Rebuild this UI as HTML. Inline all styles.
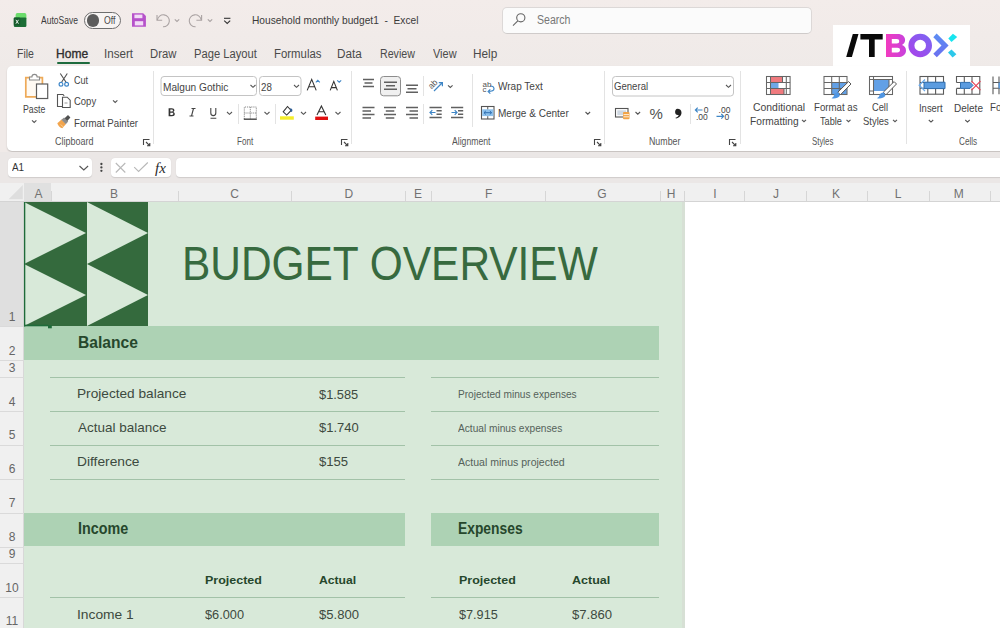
<!DOCTYPE html>
<html><head><meta charset="utf-8"><title>Excel</title><style>
*{margin:0;padding:0;box-sizing:border-box}
html,body{width:1000px;height:628px;overflow:hidden}
body{background:#f0eae8;font-family:"Liberation Sans",sans-serif;position:relative}
.a{position:absolute}
.tx{position:absolute;line-height:1;white-space:nowrap;transform-origin:0 0}
.ch{position:absolute;top:187.8px;width:40px;text-align:center;font-size:12px;line-height:1;color:#727272}
.rh{position:absolute;left:0;width:24px;text-align:center;font-size:12px;line-height:1;color:#666}
svg{position:absolute;overflow:visible}
</style></head><body>
<!-- title bar -->
<div class="a" style="left:0;top:0;width:1000px;height:70px;background:linear-gradient(#f3ecea,#efeae8)"></div>
<div class="a" style="left:501.7px;top:6.8px;width:310px;height:27.2px;background:#fbfbfb;border:1px solid #dcd8d7;border-bottom-color:#cfcbca;border-radius:5px"></div>
<!-- toggle -->
<div class="a" style="left:84px;top:11.5px;width:37px;height:17px;border:1px solid #6e6e6e;border-radius:9px;background:#f7f4f3"></div>
<div class="a" style="left:86.5px;top:14px;width:12.5px;height:12.5px;border-radius:50%;background:#5c5c5c"></div>
<!-- logo box -->
<div class="a" style="left:833px;top:25px;width:137px;height:45px;background:#fff"></div>
<!-- home underline -->
<div class="a" style="left:57px;top:61.6px;width:33px;height:2.3px;background:#1e6b3e;border-radius:1px"></div>
<!-- ribbon -->
<div class="a" style="left:7px;top:66.3px;width:1010px;height:84.3px;background:#fff;border-radius:5px;box-shadow:0 1px 1.5px rgba(0,0,0,.2)"></div>
<!-- formula bar -->
<div class="a" style="left:0;top:152px;width:1000px;height:31px;background:#ebe7e6"></div>
<div class="a" style="left:8px;top:158px;width:84px;height:19px;background:#fff;border-radius:4px;box-shadow:0 0.5px 1px rgba(0,0,0,.12)"></div>
<div class="a" style="left:111px;top:158px;width:60px;height:19px;background:#fff;border-radius:4px;box-shadow:0 0.5px 1px rgba(0,0,0,.12)"></div>
<div class="a" style="left:176px;top:158px;width:830px;height:19px;background:#fff;border-radius:4px;box-shadow:0 0.5px 1px rgba(0,0,0,.12)"></div>
<!-- column header -->
<div class="a" style="left:0;top:183px;width:1000px;height:19px;background:#f0f0f0;border-bottom:1px solid #d4d4d4"></div>
<div class="a" style="left:24px;top:183px;width:27px;height:18px;background:#e0e0e0"></div>
<!-- row header -->
<div class="a" style="left:0;top:202px;width:24px;height:426px;background:#f0f0f0;border-right:1px solid #d8d8d8"></div>
<div class="a" style="left:0;top:202px;width:24px;height:124px;background:#dfdfdf"></div>
<div class="a" style="left:50.5px;top:191px;width:1px;height:10px;background:#d6d6d6"></div><div class="a" style="left:177.5px;top:191px;width:1px;height:10px;background:#d6d6d6"></div><div class="a" style="left:290.5px;top:191px;width:1px;height:10px;background:#d6d6d6"></div><div class="a" style="left:404.5px;top:191px;width:1px;height:10px;background:#d6d6d6"></div><div class="a" style="left:430.5px;top:191px;width:1px;height:10px;background:#d6d6d6"></div><div class="a" style="left:544.5px;top:191px;width:1px;height:10px;background:#d6d6d6"></div><div class="a" style="left:659.5px;top:191px;width:1px;height:10px;background:#d6d6d6"></div><div class="a" style="left:684.0px;top:191px;width:1px;height:10px;background:#d6d6d6"></div><div class="a" style="left:744.0px;top:191px;width:1px;height:10px;background:#d6d6d6"></div><div class="a" style="left:805.5px;top:191px;width:1px;height:10px;background:#d6d6d6"></div><div class="a" style="left:867.0px;top:191px;width:1px;height:10px;background:#d6d6d6"></div><div class="a" style="left:928.5px;top:191px;width:1px;height:10px;background:#d6d6d6"></div><div class="a" style="left:989.5px;top:191px;width:1px;height:10px;background:#d6d6d6"></div><div class="a" style="left:0;top:325.5px;width:24px;height:1px;background:#dadada"></div><div class="a" style="left:0;top:359.5px;width:24px;height:1px;background:#dadada"></div><div class="a" style="left:0;top:376.5px;width:24px;height:1px;background:#dadada"></div><div class="a" style="left:0;top:410.5px;width:24px;height:1px;background:#dadada"></div><div class="a" style="left:0;top:444.5px;width:24px;height:1px;background:#dadada"></div><div class="a" style="left:0;top:478.5px;width:24px;height:1px;background:#dadada"></div><div class="a" style="left:0;top:512.5px;width:24px;height:1px;background:#dadada"></div><div class="a" style="left:0;top:546.5px;width:24px;height:1px;background:#dadada"></div><div class="a" style="left:0;top:562.5px;width:24px;height:1px;background:#dadada"></div><div class="a" style="left:0;top:596.5px;width:24px;height:1px;background:#dadada"></div>
<!-- sheet -->
<div class="a" style="left:24px;top:202px;width:976px;height:426px;background:#fff"></div>
<div class="a" style="left:24px;top:202px;width:660.5px;height:426px;background:#d8e9d9"></div>
<div class="a" style="left:682px;top:202px;width:2.5px;height:426px;background:#d7e0d5"></div>
<!-- bands -->
<div class="a" style="left:24px;top:326px;width:635px;height:34px;background:#add2b4"></div>
<div class="a" style="left:24px;top:513px;width:381px;height:33px;background:#add2b4"></div>
<div class="a" style="left:431px;top:513px;width:228px;height:33px;background:#add2b4"></div>
<!-- lines -->
<div class="a" style="left:50px;top:376.5px;width:355px;height:1px;background:#a2c2a8"></div>
<div class="a" style="left:50px;top:410.5px;width:355px;height:1px;background:#a2c2a8"></div>
<div class="a" style="left:50px;top:444.5px;width:355px;height:1px;background:#a2c2a8"></div>
<div class="a" style="left:50px;top:478.5px;width:355px;height:1px;background:#a2c2a8"></div>
<div class="a" style="left:431px;top:376.5px;width:228px;height:1px;background:#a2c2a8"></div>
<div class="a" style="left:431px;top:410.5px;width:228px;height:1px;background:#a2c2a8"></div>
<div class="a" style="left:431px;top:444.5px;width:228px;height:1px;background:#a2c2a8"></div>
<div class="a" style="left:431px;top:478.5px;width:228px;height:1px;background:#a2c2a8"></div>
<div class="a" style="left:50px;top:596.5px;width:355px;height:1px;background:#a2c2a8"></div>
<div class="a" style="left:431px;top:596.5px;width:228px;height:1px;background:#a2c2a8"></div>
<!-- graphic -->
<svg style="left:0;top:0" width="1000" height="628">
<rect x="24" y="202" width="124" height="124" fill="#346a3d"/>
<path d="M24 202 L86 233 L24 264 Z M24 264 L86 295 L24 326 Z M87 202 L148 233 L87 264 Z M87 264 L148 295 L87 326 Z" fill="#d8e9d9"/>
</svg>
<svg style="left:0;top:0" width="1000" height="628" viewBox="0 0 1000 628">
<!-- Excel icon -->
<rect x="15.6" y="13.1" width="10.8" height="7" rx="1.8" fill="#6cdc6c"/>
<rect x="13.8" y="17.6" width="12.6" height="9.3" rx="1.2" fill="#1c6e36"/>
<rect x="13.8" y="17.6" width="6.4" height="7.8" rx="1" fill="#155a2b"/>
<path d="M15.9 19.8l2.6 3.9M18.5 19.8l-2.6 3.9" stroke="#eef8f0" stroke-width=".95"/>
<!-- save -->
<path d="M132 13.2h11.2l2.7 2.7v10.9H132z" fill="#b652ca"/>
<rect x="134.4" y="14.6" width="8" height="3.6" fill="#f2dcf7"/>
<rect x="134.8" y="21.2" width="8.4" height="4.2" fill="#f2dcf7"/>
<!-- undo / redo -->
<g fill="none" stroke="#aaa3a3" stroke-width="1.1">
<path d="M157 15v5.2h5.2"/><path d="M157.4 20A6 6 0 1 1 163 26.8"/>
<path d="M174.8 19.3l2.2 2.2 2.2-2.2"/>
<path d="M201.6 15v5.2h-5.2"/><path d="M201.2 20A6 6 0 1 0 195.6 26.8"/>
<path d="M207.8 19.3l2.2 2.2 2.2-2.2"/>
</g>
<g fill="none" stroke="#333" stroke-width="1.1">
<path d="M224 18.3h6.4"/><path d="M224.2 20.6l3 2.8 3-2.8"/>
</g>
<!-- search -->
<g fill="none" stroke="#666" stroke-width="1.1"><circle cx="520.8" cy="17.8" r="4.1"/><path d="M517.8 20.8l-4.8 4.8"/></g>
<!-- ITBOX logo -->
<defs>
<linearGradient id="gB" x1="0" x2="1" y1="0" y2="0"><stop offset="0" stop-color="#f23bbf"/><stop offset="1" stop-color="#c742dd"/></linearGradient>
<linearGradient id="gO" x1="0" x2="1" y1="1" y2="0"><stop offset="0" stop-color="#a545ea"/><stop offset="1" stop-color="#7f62f2"/></linearGradient>
<linearGradient id="gC" x1="0" x2="0" y1="0" y2="1"><stop offset="0" stop-color="#5c8ef3"/><stop offset="1" stop-color="#6b6ff0"/></linearGradient>
<linearGradient id="gX" x1="0" x2="0" y1="0" y2="1"><stop offset="0" stop-color="#17e9ef"/><stop offset="1" stop-color="#2fc3ea"/></linearGradient>
</defs>
<path d="M846.2 57h5.7l6.6-23.1h-5.7z" fill="#0a0a0a"/>
<path d="M860.4 33.9h22.3v5.5h-8v17.6h-5.7V39.4h-8.6z" fill="#0a0a0a"/>
<path d="M886 33.9h11.5c5 0 7.6 2.7 7.6 6.1 0 2.3-1.2 4-3.1 4.9 2.4.8 4 2.8 4 5.5 0 4-3 6.6-8.2 6.6H886z M891.8 38.9v4.5h4.9c1.7 0 2.5-.8 2.5-2.25 0-1.45-.8-2.25-2.5-2.25z M891.8 47.8v4.6h5.5c1.8 0 2.7-.8 2.7-2.3 0-1.5-.9-2.3-2.7-2.3z" fill="url(#gB)" fill-rule="evenodd"/>
<circle cx="920.2" cy="45.5" r="8.8" fill="none" stroke="url(#gO)" stroke-width="6"/>
<path d="M936.6 33.4l12 12.2-11.8 11.7-3.5-3.5 8.2-8.2-8.2-8.4z" fill="url(#gC)"/>
<path d="M948.3 38.6l4.6-4.9 4.3 3.2-5.7 5.2z" fill="#17e5ef"/>
<path d="M948 52.6l3.5-3.2 4.9 4.9-3.8 3.2z" fill="#2cc8ea"/>
</svg>
<svg style="left:0;top:0" width="1000" height="628" viewBox="0 0 1000 628">
<!-- separators -->
<g stroke="#e3e3e3" stroke-width="1">
<path d="M153.5 71v73M351.5 71v73M604.5 71v73M740.5 71v73M906.5 71v73"/>
<path d="M238.5 104v20M275.5 104v20M423.5 76v20M423.5 104v20M472.5 74v53M690.5 104v20"/>
</g>
<!-- dialog launchers -->
<g fill="none" stroke="#444" stroke-width="1.1">
<path d="M143.5 145v-5.5h6"/><path d="M146 142l3.6 3.6M149.8 143v2.8H147"/>
<path d="M341.5 145v-5.5h6"/><path d="M344 142l3.6 3.6M347.8 143v2.8H345"/>
<path d="M594.5 145v-5.5h6"/><path d="M597 142l3.6 3.6M600.8 143v2.8H598"/>
<path d="M729.5 145v-5.5h6"/><path d="M732 142l3.6 3.6M735.8 143v2.8H733"/>
</g>
<!-- Paste -->
<path d="M25.8 77.6h16.6v19.2H25.8z" fill="#fffaf3" stroke="#eeaa58" stroke-width="1.7"/>
<path d="M29.5 80h10v-3h-2.4a2.6 2.6 0 0 0-5.2 0h-2.4z" fill="#fff" stroke="#8b8b8b" stroke-width="1.1"/>
<rect x="36.5" y="84" width="11.2" height="14.5" fill="#fff" stroke="#5c5c5c" stroke-width="1.2"/>
<!-- font boxes -->
<rect x="161" y="76.5" width="95.5" height="19" rx="3" fill="#fff" stroke="#c4c4c4"/>
<rect x="259.5" y="76.5" width="41.5" height="19" rx="3" fill="#fff" stroke="#c4c4c4"/>
<rect x="612.5" y="76.5" width="121" height="19.5" rx="3" fill="#fff" stroke="#c4c4c4"/>
<!-- chevrons -->
<g fill="none" stroke="#555" stroke-width="1.1">
<path d="M32 120.3l2.2 2.2 2.2-2.2"/>
<path d="M113 100.3l2.2 2.2 2.2-2.2"/>
<path d="M250.5 85l2.5 2.3 2.5-2.3"/>
<path d="M294 85l2.5 2.3 2.5-2.3"/>
<path d="M227 112l2.5 2.3 2.5-2.3"/>
<path d="M264.5 112l2.5 2.3 2.5-2.3"/>
<path d="M301 112l2.5 2.3 2.5-2.3"/>
<path d="M335.5 112l2.5 2.3 2.5-2.3"/>
<path d="M448 85.3l2.3 2.2 2.3-2.2"/>
<path d="M585.5 112l2.3 2.2 2.3-2.2"/>
<path d="M726 85l2.5 2.3 2.5-2.3"/>
<path d="M635.5 112l2.3 2.2 2.3-2.2"/>
<path d="M802 119.8l2 1.9 2-1.9"/>
<path d="M846.5 119.8l2 1.9 2-1.9"/>
<path d="M893 119.8l2 1.9 2-1.9"/>
<path d="M928.8 120l2.2 2.1 2.2-2.1"/>
<path d="M965.3 120l2.2 2.1 2.2-2.1"/>
<path d="M79.5 166l4.3 4 4.3-4"/>
</g>
<!-- scissors -->
<path d="M60.3 73.5l5.6 8.5M67.3 73.5l-5.6 8.5" stroke="#505050" stroke-width="1.1" fill="none"/>
<circle cx="61" cy="84.3" r="1.9" fill="none" stroke="#3e86c8" stroke-width="1.2"/>
<circle cx="66.6" cy="84.3" r="1.9" fill="none" stroke="#3e86c8" stroke-width="1.2"/>
<!-- copy -->
<path d="M62.5 106.5h-5V94.5h5.5l1.2 1.4" fill="none" stroke="#555" stroke-width="1.1"/>
<path d="M62.5 97.2h4.7l3 3v7.3h-7.7z" fill="#fff" stroke="#555" stroke-width="1.1"/>
<path d="M64.5 103h3" stroke="#999"/>
<!-- format painter -->
<path d="M57.3 123.3l4.3-3.7 4.4 4.4-3.7 4.3c-2-.4-4-2-5-5z" fill="#f2a54e"/>
<path d="M60.8 124.5l2.5 2.5" stroke="#fbd39a" stroke-width="1"/>
<path d="M61.4 119.8l2.7-2.4 4.1 4.1-2.4 2.7z" fill="#8c8c8c"/>
<path d="M64.6 118.2l3.4-3.1 2.4 2.4-3.1 3.4z" fill="#505050"/>
<!-- grow/shrink -->
<g fill="none" stroke="#333" stroke-width="1.1">
<path d="M307.2 90.4l4.5-11 4.5 11M308.8 86.8h5.8"/>
<path d="M330.2 90.4l3.6-9 3.6 9M331.4 87.6h4.8"/>
</g>
<g fill="none" stroke="#3f86c6" stroke-width="1.1">
<path d="M315.8 82.3l2-2 2 2"/>
<path d="M337.2 80.4l2 1.8 2-1.8"/>
</g>
<!-- B I U -->
<path d="M168.6 108.2h3.2c1.6 0 2.6.8 2.6 2 0 .9-.5 1.5-1.3 1.8 1 .2 1.7 1 1.7 2.1 0 1.4-1.1 2.2-2.8 2.2h-3.4z M170.3 109.5v2h1.4c.8 0 1.2-.4 1.2-1s-.4-1-1.2-1z M170.3 112.7v2.3h1.7c.9 0 1.3-.4 1.3-1.15 0-.75-.5-1.15-1.3-1.15z" fill="#333" fill-rule="evenodd"/>
<path d="M191.5 108.5h4M189.5 116h4M193.5 108.5l-2 7.5" fill="none" stroke="#444" stroke-width="1.1"/>
<path d="M210.8 108v5c0 1.6 1 2.6 2.5 2.6s2.5-1 2.5-2.6v-5M210.5 118.3h5.8" fill="none" stroke="#444" stroke-width="1.1"/>
<!-- borders -->
<g fill="none" stroke="#8a8a8a" stroke-width="1" stroke-dasharray="1.2 .9"><path d="M244.3 119V107h12v12M250.3 107v12M244.3 113h12"/></g><path d="M243.8 119.2h13" stroke="#505050" stroke-width="1.5"/>
<!-- fill color -->
<path d="M283.2 111.8l4.3-5.3 3.6 4-4.4 4.6z" fill="#fff" stroke="#333" stroke-width="1.1"/>
<path d="M290.2 108.3c1.2-.2 2.2.8 2.2 2.2 0 .8-.5 1.4-1.1 1.4s-1.1-.6-1.1-1.4z" fill="#2e5f99"/>
<rect x="280" y="116.3" width="13.8" height="3.4" fill="#f4ed2a"/>
<!-- font color -->
<path d="M317 115l4.4-9 4.4 9M318.6 111.8h5.6" fill="none" stroke="#333" stroke-width="1.1"/>
<rect x="315.2" y="116.6" width="12.8" height="3.4" fill="#e01010"/>
</svg>
<svg style="left:0;top:0" width="1000" height="628" viewBox="0 0 1000 628">
<!-- alignment lines -->
<rect x="380.5" y="76.5" width="20" height="19.3" rx="3" fill="#f0f0f0" stroke="#8c8c8c"/>
<g stroke="#606060" stroke-width="1.45">
<path d="M363 79.5h11M364.5 83h8M363 86.5h11"/>
<path d="M384 82.3h13M386 85.8h9M384 89.2h13"/>
<path d="M406 85.3h12M407.5 88.8h9M406 92.2h12"/>
<path d="M362.5 107.5h12M362.5 111h8.5M362.5 114.5h12M362.5 118h8.5"/>
<path d="M384 107.5h12M385.8 111h8.5M384 114.5h12M385.8 118h8.5"/>
<path d="M406 107.5h12M409.5 111h8.5M406 114.5h12M409.5 118h8.5"/>
<path d="M429.5 107.5h12.2M436.5 110.8h5.2M436.5 114.2h5.2M429.5 117.5h12.2"/>
<path d="M451 107.5h12.2M458 110.8h5.2M458 114.2h5.2M451 117.5h12.2"/>
</g>
<g fill="none" stroke="#3f86c6" stroke-width="1.2">
<path d="M435.5 112.5h-5.5M432.3 110.2l-2.3 2.3 2.3 2.3"/>
<path d="M451.5 112.5h5.5M454.7 110.2l2.3 2.3-2.3 2.3"/>
<path d="M434 91l8-8M438.8 82.6h3.6v3.6"/>
<path d="M488 91.5c3 0 6-.2 6-2.7s-2.5-2.8-4-2.8M490.3 89.3l-2.2 2.2 2.2 2.2"/>
</g>
<text x="0" y="0" transform="translate(431.5 89.5) rotate(-45)" font-family="Liberation Sans" font-size="8.5" fill="#555">ab</text>
<text x="482.5" y="86.6" font-family="Liberation Sans" font-size="8" fill="#555">ab</text>
<text x="482.5" y="92" font-family="Liberation Sans" font-size="8" fill="#555">c</text>
<!-- merge -->
<rect x="481.5" y="106.5" width="12.5" height="12.5" fill="#fff" stroke="#555" stroke-width="1.1"/>
<rect x="482.2" y="109.3" width="11.2" height="6.8" fill="#8cc0ec"/>
<path d="M484 112.7h7.6M485.8 111l-1.8 1.7 1.8 1.7M489.8 111l1.8 1.7-1.8 1.7" fill="none" stroke="#2f6fb0" stroke-width="1"/>
<path d="M487.75 106.5v2.8M487.75 116.2v2.8" stroke="#555"/>
<!-- accounting -->
<rect x="615.5" y="108.5" width="12.5" height="8.5" fill="#fff" stroke="#555" stroke-width="1.1"/>
<rect x="617.3" y="110.3" width="8.8" height="4.9" fill="#cfd8e2"/>
<rect x="623" y="112" width="6.5" height="7.3" rx="1" fill="#f2a447"/>
<path d="M623.5 114.6h5.5M623.5 116.8h5.5" stroke="#fff" stroke-width=".8"/>
<text x="649.5" y="118.5" font-family="Liberation Sans" font-size="15" fill="#505050">%</text>
<path d="M677.3 108.8c2.6 0 4.2 1.6 4.2 3.9 0 3-2.5 5.2-5.6 5.9l-.4-.9c2-.7 3-1.8 3.2-2.8-.3.1-.7.1-1 .1-1.5 0-2.6-1-2.6-3 0-1.9 1-3.2 2.2-3.2z" fill="#222"/>
<!-- inc/dec decimal -->
<path d="M702.5 110h-7M697.7 107.7l-2.3 2.3 2.3 2.3" fill="none" stroke="#3f86c6" stroke-width="1.2"/>
<path d="M716.5 116.3h7M721.3 114l2.3 2.3-2.3 2.3" fill="none" stroke="#3f86c6" stroke-width="1.2"/>
<text x="703.8" y="113.3" font-family="Liberation Sans" font-size="8.5" fill="#444">0</text>
<text x="696" y="119.5" font-family="Liberation Sans" font-size="8.5" fill="#444">.00</text>
<text x="718.6" y="113.3" font-family="Liberation Sans" font-size="8.5" fill="#444">.00</text>
<text x="724.6" y="119.5" font-family="Liberation Sans" font-size="8.5" fill="#444">0</text>
<!-- conditional formatting -->
<rect x="770.5" y="76.5" width="12" height="6" fill="#f07a7e"/>
<rect x="770.5" y="82.5" width="8" height="6" fill="#6ea8e6"/>
<rect x="770.5" y="88.5" width="13.5" height="6" fill="#f07a7e"/>
<g fill="none" stroke="#666" stroke-width="1.05">
<rect x="766.5" y="76.5" width="23.6" height="18"/>
<path d="M770.5 76.5v18M782.5 76.5v6M784 88.5v6M786.3 76.5v18M766.5 82.5h23.6M766.5 88.5h23.6"/>
</g>
<!-- format as table -->
<rect x="831.7" y="82.3" width="15.2" height="12.3" fill="#62a0e6"/>
<g fill="none" stroke="#666" stroke-width="1.05">
<rect x="824" y="76.5" width="23" height="18"/>
<path d="M831.7 76.5v18M839.3 76.5v18M824 82.5h23M824 88.5h23"/>
</g>
<path d="M848.6 81.6l-10.8 10.6 2.6 2.6 10.6-10.8z" fill="#fff" stroke="#555" stroke-width="1"/>
<path d="M838.5 92.5c-2.5-.3-4.5 1.2-4.8 3.5-.2 1.1-1.5 1.8-2.2 2.2 3.2.6 6.6.1 8.4-2.5z" fill="#4f95e2"/>
<!-- cell styles -->
<rect x="873.5" y="79.5" width="15.5" height="11.5" fill="#62a0e6"/>
<g fill="none" stroke="#666" stroke-width="1.05">
<rect x="869.5" y="76.5" width="23" height="18"/>
<path d="M873.5 76.5v18M869.5 79.5h23M889 79.5v12M869.5 91h4"/>
</g>
<path d="M894.1 81.6l-10.8 10.6 2.6 2.6 10.6-10.8z" fill="#fff" stroke="#555" stroke-width="1"/>
<path d="M884 92.5c-2.5-.3-4.5 1.2-4.8 3.5-.2 1.1-1.5 1.8-2.2 2.2 3.2.6 6.6.1 8.4-2.5z" fill="#4f95e2"/>
<!-- insert -->
<g fill="none" stroke="#5a5a5a" stroke-width="1.1">
<rect x="920" y="76.5" width="23.5" height="17.7"/>
<path d="M927.8 76.5v17.7M935.6 76.5v17.7M920 82.5h23.5M920 88.3h23.5"/>
</g>
<path d="M924 82.2h21v6.4h-21z" fill="#5b9ce0" stroke="#2f6fb0" stroke-width="1"/>
<path d="M925 79.5l-5.8 5.8 5.8 5.8" fill="none" stroke="#6aa8e8" stroke-width="1.3"/>
<!-- delete -->
<g fill="none" stroke="#5a5a5a" stroke-width="1.1">
<path d="M956.5 82.5v-6h23.3v17.7h-23.3v-5.8"/>
<path d="M964.3 76.5v6M972 76.5v6M964.3 88.4v5.8M972 88.4v5.8M956.5 82.5h4M956.5 88.4h4"/>
</g>
<path d="M960.5 82.4h9.5l3 3-3 3h-9.5z" fill="#5b9ce0" stroke="#2f6fb0" stroke-width="1"/>
<path d="M971.5 81.2l9 9M980.5 81.2l-9 9" stroke="#e8455a" stroke-width="1.2"/>
<!-- format (clipped) -->
<g fill="none" stroke="#5a5a5a" stroke-width="1.1"><path d="M993 76.5v17.7M993 82.5h8M993 88.3h8M999 76.5v17.7"/></g>
<rect x="998.5" y="82.5" width="2" height="6" fill="#5b9ce0"/>
<!-- formula bar -->
<g fill="#444"><circle cx="101.4" cy="164" r="1.15"/><circle cx="101.4" cy="167.4" r="1.15"/><circle cx="101.4" cy="170.8" r="1.15"/></g>
<path d="M115.8 163l9.5 9.5M125.3 163l-9.5 9.5" stroke="#b8b8b8" stroke-width="1.1"/>
<path d="M134.2 167.2l4.4 4.3 9.2-9" fill="none" stroke="#b8b8b8" stroke-width="1.1"/>
<text x="155" y="172.5" font-family="Liberation Serif" font-style="italic" font-size="15" fill="#2a2a2a">fx</text>
<!-- select all triangle -->
<path d="M22.8 185v14.2H8.6z" fill="#dedede"/>
<!-- A1 selection -->
<path d="M24.6 202v124.5" stroke="#1f6b3a" stroke-width="1.4"/>
<path d="M24 325.5h24" stroke="#1f6b3a" stroke-width="1.6"/>
<rect x="48" y="325.3" width="3.8" height="3" fill="#1f6b3a"/>
</svg>

<div class=ch style="left:18.5px">A</div>
<div class=ch style="left:94px">B</div>
<div class=ch style="left:214.5px">C</div>
<div class=ch style="left:328.75px">D</div>
<div class=ch style="left:398px">E</div>
<div class=ch style="left:468.75px">F</div>
<div class=ch style="left:582px">G</div>
<div class=ch style="left:651px">H</div>
<div class=ch style="left:695px">I</div>
<div class=ch style="left:756px">J</div>
<div class=ch style="left:816px">K</div>
<div class=ch style="left:878px">L</div>
<div class=ch style="left:938.75px">M</div>
<div class=rh style="top:310.8px">1</div>
<div class=rh style="top:345.3px">2</div>
<div class=rh style="top:361.8px">3</div>
<div class=rh style="top:395.5px">4</div>
<div class=rh style="top:429.4px">5</div>
<div class=rh style="top:463.4px">6</div>
<div class=rh style="top:497.4px">7</div>
<div class=rh style="top:531.4px">8</div>
<div class=rh style="top:547.8px">9</div>
<div class=rh style="top:581.5px">10</div>
<div class=rh style="top:615.4px">11</div>
<div class=tx style="left:41.00px;top:15.08px;font-size:10.5px;font-weight:400;color:#3a3a3a;transform:scaleX(0.8098);">AutoSave</div>
<div class=tx style="left:104.00px;top:15.08px;font-size:10.5px;font-weight:400;color:#4a4a4a;transform:scaleX(0.8276);">Off</div>
<div class=tx style="left:251.50px;top:15.35px;font-size:11px;font-weight:400;color:#3a3a3a;transform:scaleX(0.9257);white-space:pre">Household monthly budget1  -  Excel</div>
<div class=tx style="left:537.00px;top:13.98px;font-size:12.5px;font-weight:400;color:#777777;transform:scaleX(0.8448);">Search</div>
<div class=tx style="left:16.86px;top:48.08px;font-size:12.5px;font-weight:400;color:#4a4a4a;transform:scaleX(0.8390);">File</div>
<div class=tx style="left:104.37px;top:48.08px;font-size:12.5px;font-weight:400;color:#4a4a4a;transform:scaleX(0.9289);">Insert</div>
<div class=tx style="left:150.40px;top:48.08px;font-size:12.5px;font-weight:400;color:#4a4a4a;transform:scaleX(0.9025);">Draw</div>
<div class=tx style="left:193.61px;top:48.08px;font-size:12.5px;font-weight:400;color:#4a4a4a;transform:scaleX(0.8950);">Page Layout</div>
<div class=tx style="left:274.29px;top:48.08px;font-size:12.5px;font-weight:400;color:#4a4a4a;transform:scaleX(0.9106);">Formulas</div>
<div class=tx style="left:337.46px;top:48.08px;font-size:12.5px;font-weight:400;color:#4a4a4a;transform:scaleX(0.9390);">Data</div>
<div class=tx style="left:379.65px;top:48.08px;font-size:12.5px;font-weight:400;color:#4a4a4a;transform:scaleX(0.8521);">Review</div>
<div class=tx style="left:432.80px;top:48.08px;font-size:12.5px;font-weight:400;color:#4a4a4a;transform:scaleX(0.8764);">View</div>
<div class=tx style="left:473.15px;top:48.08px;font-size:12.5px;font-weight:400;color:#4a4a4a;transform:scaleX(0.9452);">Help</div>
<div class=tx style="left:56.24px;top:48.08px;font-size:12.5px;font-weight:400;color:#2e2e2e;transform:scaleX(0.9632);-webkit-text-stroke:0.35px #2e2e2e">Home</div>
<div class=tx style="left:23.30px;top:103.78px;font-size:10.5px;font-weight:400;color:#444444;transform:scaleX(0.8330);">Paste</div>
<div class=tx style="left:74.00px;top:74.58px;font-size:10.5px;font-weight:400;color:#444444;transform:scaleX(0.8647);">Cut</div>
<div class=tx style="left:74.00px;top:95.88px;font-size:10.5px;font-weight:400;color:#444444;transform:scaleX(0.9025);">Copy</div>
<div class=tx style="left:74.00px;top:117.78px;font-size:10.5px;font-weight:400;color:#444444;transform:scaleX(0.9222);">Format Painter</div>
<div class=tx style="left:55.20px;top:136.07px;font-size:10.5px;font-weight:400;color:#555555;transform:scaleX(0.8558);">Clipboard</div>
<div class=tx style="left:162.90px;top:81.58px;font-size:10.5px;font-weight:400;color:#444444;transform:scaleX(0.9651);">Malgun Gothic</div>
<div class=tx style="left:261.20px;top:81.58px;font-size:10.5px;font-weight:400;color:#444444;transform:scaleX(0.9291);">28</div>
<div class=tx style="left:236.70px;top:136.07px;font-size:10.5px;font-weight:400;color:#555555;transform:scaleX(0.7680);">Font</div>
<div class=tx style="left:498.00px;top:81.08px;font-size:10.5px;font-weight:400;color:#444444;transform:scaleX(0.9543);">Wrap Text</div>
<div class=tx style="left:498.40px;top:108.38px;font-size:10.5px;font-weight:400;color:#444444;transform:scaleX(0.9542);">Merge &amp; Center</div>
<div class=tx style="left:451.50px;top:136.07px;font-size:10.5px;font-weight:400;color:#555555;transform:scaleX(0.8231);">Alignment</div>
<div class=tx style="left:614.20px;top:81.28px;font-size:10.5px;font-weight:400;color:#444444;transform:scaleX(0.9130);">General</div>
<div class=tx style="left:649.20px;top:136.07px;font-size:10.5px;font-weight:400;color:#555555;transform:scaleX(0.8402);">Number</div>
<div class=tx style="left:752.80px;top:101.83px;font-size:10.5px;font-weight:400;color:#444444;transform:scaleX(0.9923);">Conditional</div>
<div class=tx style="left:749.90px;top:115.98px;font-size:10.5px;font-weight:400;color:#444444;transform:scaleX(0.9693);">Formatting</div>
<div class=tx style="left:814.00px;top:101.83px;font-size:10.5px;font-weight:400;color:#444444;transform:scaleX(0.9211);">Format as</div>
<div class=tx style="left:820.00px;top:115.98px;font-size:10.5px;font-weight:400;color:#444444;transform:scaleX(0.8709);">Table</div>
<div class=tx style="left:872.30px;top:101.83px;font-size:10.5px;font-weight:400;color:#444444;transform:scaleX(0.8843);">Cell</div>
<div class=tx style="left:863.30px;top:115.98px;font-size:10.5px;font-weight:400;color:#444444;transform:scaleX(0.8997);">Styles</div>
<div class=tx style="left:812.30px;top:136.07px;font-size:10.5px;font-weight:400;color:#555555;transform:scaleX(0.7480);">Styles</div>
<div class=tx style="left:919.30px;top:103.48px;font-size:10.5px;font-weight:400;color:#444444;transform:scaleX(0.8997);">Insert</div>
<div class=tx style="left:953.70px;top:103.48px;font-size:10.5px;font-weight:400;color:#444444;transform:scaleX(0.9537);">Delete</div>
<div class=tx style="left:989.50px;top:102.08px;font-size:10.5px;font-weight:400;color:#444444;transform:scaleX(0.9299);">Format</div>
<div class=tx style="left:958.70px;top:136.07px;font-size:10.5px;font-weight:400;color:#555555;transform:scaleX(0.7753);">Cells</div>
<div class=tx style="left:11.60px;top:162.25px;font-size:11px;font-weight:400;color:#333333;transform:scaleX(0.8998);">A1</div>
<div class=tx style="left:181.68px;top:239.38px;font-size:48.5px;font-weight:400;color:#376a3f;transform:scaleX(0.8747);">BUDGET OVERVIEW</div>
<div class=tx style="left:77.92px;top:334.80px;font-size:16px;font-weight:700;color:#26472c;transform:scaleX(0.9757);">Balance</div>
<div class=tx style="left:76.86px;top:387.28px;font-size:13.2px;font-weight:400;color:#3d4a40;transform:scaleX(1.0361);">Projected balance</div>
<div class=tx style="left:318.90px;top:387.68px;font-size:13.2px;font-weight:400;color:#3d4a40;transform:scaleX(0.9725);">$1.585</div>
<div class=tx style="left:457.80px;top:388.75px;font-size:11px;font-weight:400;color:#55625a;transform:scaleX(0.9196);">Projected minus expenses</div>
<div class=tx style="left:77.90px;top:420.98px;font-size:13.2px;font-weight:400;color:#3d4a40;transform:scaleX(1.0223);">Actual balance</div>
<div class=tx style="left:318.90px;top:421.28px;font-size:13.2px;font-weight:400;color:#3d4a40;transform:scaleX(0.9850);">$1.740</div>
<div class=tx style="left:457.80px;top:422.85px;font-size:11px;font-weight:400;color:#55625a;transform:scaleX(0.9215);">Actual minus expenses</div>
<div class=tx style="left:76.86px;top:455.08px;font-size:13.2px;font-weight:400;color:#3d4a40;transform:scaleX(1.0439);">Difference</div>
<div class=tx style="left:318.90px;top:455.28px;font-size:13.2px;font-weight:400;color:#3d4a40;transform:scaleX(0.9930);">$155</div>
<div class=tx style="left:457.80px;top:456.65px;font-size:11px;font-weight:400;color:#55625a;transform:scaleX(0.9581);">Actual minus projected</div>
<div class=tx style="left:77.81px;top:521.40px;font-size:16px;font-weight:700;color:#26472c;transform:scaleX(0.8945);">Income</div>
<div class=tx style="left:458.34px;top:521.40px;font-size:16px;font-weight:700;color:#26472c;transform:scaleX(0.8644);">Expenses</div>
<div class=tx style="left:205.30px;top:574.67px;font-size:11.8px;font-weight:700;color:#26472c;transform:scaleX(1.0587);">Projected</div>
<div class=tx style="left:318.70px;top:574.67px;font-size:11.8px;font-weight:700;color:#26472c;transform:scaleX(1.0314);">Actual</div>
<div class=tx style="left:458.60px;top:574.67px;font-size:11.8px;font-weight:700;color:#26472c;transform:scaleX(1.0569);">Projected</div>
<div class=tx style="left:572.00px;top:574.67px;font-size:11.8px;font-weight:700;color:#26472c;transform:scaleX(1.0594);">Actual</div>
<div class=tx style="left:76.65px;top:607.98px;font-size:13.2px;font-weight:400;color:#3d4a40;transform:scaleX(1.0471);">Income 1</div>
<div class=tx style="left:205.30px;top:608.18px;font-size:13.2px;font-weight:400;color:#3d4a40;transform:scaleX(0.9675);">$6.000</div>
<div class=tx style="left:318.70px;top:608.18px;font-size:13.2px;font-weight:400;color:#3d4a40;transform:scaleX(0.9900);">$5.800</div>
<div class=tx style="left:458.60px;top:608.18px;font-size:13.2px;font-weight:400;color:#3d4a40;transform:scaleX(0.9600);">$7.915</div>
<div class=tx style="left:572.00px;top:608.18px;font-size:13.2px;font-weight:400;color:#3d4a40;transform:scaleX(0.9950);">$7.860</div>
</body></html>
